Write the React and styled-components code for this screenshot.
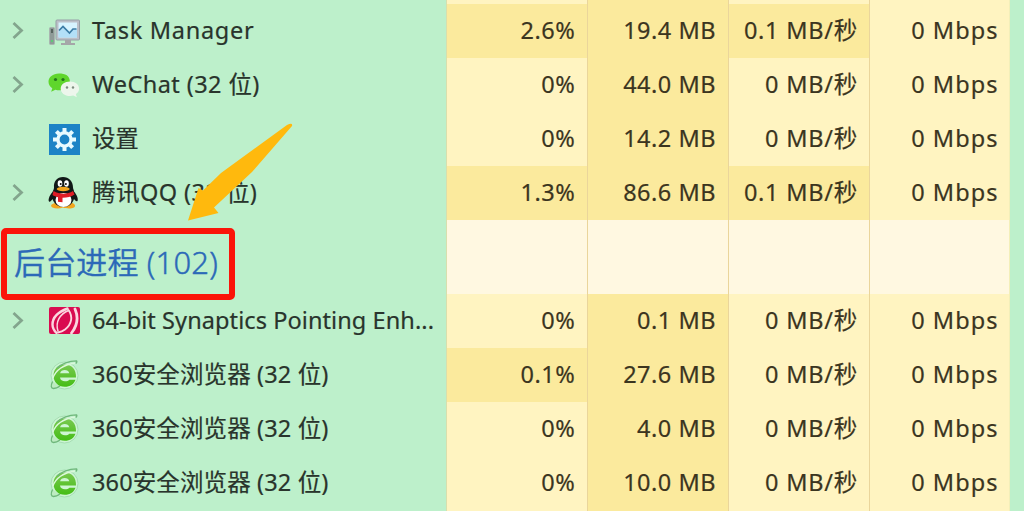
import React from "react";
import styled, { createGlobalStyle } from "styled-components";

const GlobalStyle = createGlobalStyle`
  html, body { margin: 0; padding: 0; overflow: hidden; background: #bdf0cb; }
  * { box-sizing: border-box; }
`;

const Window = styled.main`
  position: relative;
  width: 1024px;
  height: 511px;
  overflow: hidden;
  background: #bdf0cb;
  color: #29342c;
  font-family: "Noto Sans", "Noto Sans CJK SC", sans-serif;
  font-size: 23.5px;
  line-height: 53px;
  white-space: pre;
  -webkit-text-stroke: 0.2px currentColor;
`;

const Row = styled.div`
  display: grid;
  grid-template-columns: 447px 141px 141px 141px 140px;
  height: ${(p) => p.$height || 54}px;
`;

const NameCell = styled.div`
  display: flex;
  padding-left: 9px;
  border-right: 1px solid #d8dfad;
`;

const Arrow = styled.span`
  display: flex;
  align-items: center;
  width: 39px;
`;

const IconBox = styled.span`
  display: flex;
  align-items: center;
  width: 44px;
`;

const Label = styled.span`
  letter-spacing: ${(p) => p.$spacing || 0}px;
`;

const tones = { low: "#fff4c1", high: "#fbea9d", group: "#fff8e1" };

const Cell = styled.div`
  display: flex;
  justify-content: flex-end;
  padding-right: ${(p) => p.$pad || 11}px;
  background: ${(p) => tones[p.$tone]};
  border-right: 1px solid #ead59b;
  color: #3b351f;
  letter-spacing: ${(p) => p.$spacing || 0}px;

  &:last-child {
    border-right-color: #f3efb9;
  }
`;

const GroupTitle = styled.h2`
  margin: 7px 0 0 5px;
  font-size: 31px;
  font-weight: 350;
  line-height: 70px;
  color: #2c69b8;
  letter-spacing: 0.15px;
  -webkit-text-stroke: 0.4px currentColor;
`;

const Highlight = styled.div`
  position: absolute;
  left: 1px;
  top: 228px;
  width: 234px;
  height: 72px;
  border: 6px solid #fb1409;
  border-radius: 5px;
`;

const Pointer = styled.svg`
  position: absolute;
  left: 180px;
  top: 116px;
`;

const Chevron = () => (
  <svg width="20" height="22" viewBox="0 0 20 22" fill="none" stroke="#83a58d" strokeWidth="2.8">
    <path d="M4.500 3 12.500 10.500 4.500 18" />
  </svg>
);

const TaskManagerIcon = () => (
  <svg width="32" height="32" viewBox="0 0 32 32">
    <rect x="1.5" y="12.5" width="5" height="17" rx="1" fill="#8f9b98" stroke="#a9b5b0" />
    <path d="M3 14h2v4H3z" fill="#57645f" />
    <path d="M3 25h2v2H3z" fill="#5ec977" />
    <rect x="8" y="5" width="23.5" height="20" rx="1" fill="#bcc0c8" stroke="#969fa6" />
    <rect x="10.5" y="7.5" width="18.5" height="15" fill="#d6f4ff" />
    <path d="M10.5 16l5-5 6 7 3-4h4.500v8.500h-18.500z" fill="#b3e0f8" />
    <path d="M11 15.500 15 11.500 21.500 18 25 14h3.500" fill="none" stroke="#3b7ca5" strokeWidth="1.700" />
    <path d="M17 25h6v3h4v2H13v-2h4z" fill="#a5a6a8" />
  </svg>
);

const WeChatIcon = () => (
  <svg width="32" height="32" viewBox="0 0 32 32">
    <path d="M11 4.500C4.800 4.500.5 8.100.5 12.800c0 2.700 1.500 5 3.800 6.500L3.200 22.800l4.200-2c7.500 2 14.500-1.800 14.500-8S17.300 4.500 11 4.500z" fill="#5fd62c" />
    <path d="M22 12.500c-5.300 0-9.300 3.100-9.300 7.200s4 7.300 9.300 7.300c1.200 0 2.300-.2 3.300-.5l3.500 1.700-.9-3.100c2-1.300 3.200-3.200 3.200-5.400 0-4.100-3.900-7.200-9.100-7.200z" fill="#edf6ec" />
    <circle cx="7.500" cy="10.500" r="1.600" fill="#23751c" />
    <circle cx="15" cy="10.500" r="1.600" fill="#23751c" />
    <circle cx="19" cy="18.500" r="1.200" fill="#7d8c7f" />
    <circle cx="25" cy="18.500" r="1.200" fill="#7d8c7f" />
  </svg>
);

const SettingsIcon = () => (
  <svg width="32" height="32" viewBox="0 0 32 32">
    <rect x="1" y="1" width="31" height="31" fill="#1c83c6" />
    <g transform="translate(16.500 16.500)" stroke="#e8faff" fill="none">
      {[0, 45, 90, 135, 180, 225, 270, 315].map((a) => (
        <path key={a} d="M0-7.500V-11.500" strokeWidth="4" transform={`rotate(${a})`} />
      ))}
      <circle r="6.600" strokeWidth="3.400" />
    </g>
  </svg>
);

const QQIcon = () => (
  <svg width="32" height="34" viewBox="0 0 32 34">
    <path d="M7 27c-4 1-5 3-2.500 4.500C8 33 12 32.500 15 31.500c3 1 8 1.500 11 0 2-1.500 1-4-3-5z" fill="#f2a51d" />
    <path d="M15 1C9 1 5.500 5.500 6 11.500c0 2-1 3-1.500 4.500C1 20 0 24 1 25.500c1 1 2.500-1 3.500-2.500 1.500 5 6 8 11 8s9-3 10.500-8c1 1.500 2.500 3 3.500 2 1-2-.5-6-3.500-9.500 0-1.500-1-2.500-1-4C25 5.500 21 1 15 1z" fill="#111817" />
    <ellipse cx="15.500" cy="24" rx="8" ry="7" fill="#fff" />
    <path d="M5.500 15c6 3.500 14 3.500 19.500 0l1.500 3.500c-3.500 2.500-7 3.200-12 3.200v4.500l-4.500-.5v-4.500c-2-.5-4-1.200-5.500-2.200z" fill="#df1d26" />
    <ellipse cx="12" cy="7.500" rx="2.300" ry="3.300" fill="#fff" />
    <ellipse cx="18.500" cy="7.500" rx="2.300" ry="3.300" fill="#fff" />
    <circle cx="12.700" cy="8" r="1" fill="#111" />
    <circle cx="17.900" cy="8" r="1" fill="#111" />
    <ellipse cx="15.200" cy="13" rx="6.500" ry="2.200" fill="#f2a51d" />
  </svg>
);

const SynapticsIcon = () => (
  <svg width="32" height="30" viewBox="0 0 32 30">
    <rect x="1" y="1" width="31" height="27" rx="2" fill="#d90b50" />
    <g fill="none" stroke="#fbd6df" strokeLinecap="round">
      <path d="M19.500 2.500C10 6 4.500 12 4.500 18.500c0 3.500 1.500 6 4 8.500" strokeWidth="2.400" />
      <path d="M10 25C7 16 12 8 20.500 4.500" strokeWidth="1.500" />
      <path d="M20.500 4c4.500 6.500 3.500 14-3.500 19.500-2 1.500-4.500 2.500-7 3" strokeWidth="1.900" />
      <path d="M27 3c3.500 8 2 17-3.500 24" strokeWidth="2.800" />
    </g>
  </svg>
);

const BrowserIcon = () => (
  <svg width="32" height="34" viewBox="0 0 32 34">
    <defs>
      <linearGradient id="leaf" x1="0" y1="0" x2="0" y2="1">
        <stop offset="0" stopColor="#79c950" />
        <stop offset="1" stopColor="#45bd16" />
      </linearGradient>
    </defs>
    <circle cx="16.500" cy="17.500" r="13.500" fill="#cdf6d3" stroke="#a6ddb4" />
    <path d="M4.500 23.500c-2 4.500-1.500 7 1 7 2 0 4.500-1 6.500-2.500" fill="#bdecc1" stroke="#6fb77b" strokeWidth="1.300" />
    <path d="M28 19.500H12c.3 2.600 2.300 3.800 5 3.800 2 0 3.300-.6 4.300-1.600h6.200C26 26.200 22 28.800 16.800 28.800 10 28.800 5.500 24.300 5.500 17.600 5.500 11.100 10.200 6.600 16.800 6.600c7 0 11.500 5 11.200 12.900zM21.300 15.300c-.5-2.200-2.300-3.300-4.600-3.300s-4.100 1.100-4.600 3.300z" fill="url(#leaf)" />
    <path d="M5 20C7.500 12.500 15 7 27 5" fill="none" stroke="#dcf8dc" strokeWidth="1.300" />
    <path d="M9 10C14 5.500 21 3 28.500 2.800c.8.500.3 1.700-.8 2.700" fill="none" stroke="#6fb77b" strokeWidth="1.300" />
  </svg>
);

const icons = {
  task: TaskManagerIcon,
  wechat: WeChatIcon,
  settings: SettingsIcon,
  qq: QQIcon,
  synaptics: SynapticsIcon,
  browser: BrowserIcon,
};

const apps = [
  { icon: "task", name: "Task Manager", spacing: 0.7, open: true, values: ["2.6%", "19.4 MB", "0.1 MB/秒", "0 Mbps"] },
  { icon: "wechat", name: "WeChat (32 位)", spacing: 0.42, open: true, values: ["0%", "44.0 MB", "0 MB/秒", "0 Mbps"] },
  { icon: "settings", name: "设置", spacing: -0.2, values: ["0%", "14.2 MB", "0 MB/秒", "0 Mbps"] },
  { icon: "qq", name: "腾讯QQ (32 位)", spacing: 0.45, open: true, values: ["1.3%", "86.6 MB", "0.1 MB/秒", "0 Mbps"] },
];

const background = [
  { icon: "synaptics", name: "64-bit Synaptics Pointing Enh...", spacing: 0.08, open: true, values: ["0%", "0.1 MB", "0 MB/秒", "0 Mbps"] },
  { icon: "browser", name: "360安全浏览器 (32 位)", spacing: 0.13, values: ["0.1%", "27.6 MB", "0 MB/秒", "0 Mbps"] },
  { icon: "browser", name: "360安全浏览器 (32 位)", spacing: 0.13, values: ["0%", "4.0 MB", "0 MB/秒", "0 Mbps"] },
  { icon: "browser", name: "360安全浏览器 (32 位)", spacing: 0.13, values: ["0%", "10.0 MB", "0 MB/秒", "0 Mbps"] },
];

const columns = [
  { spacing: 0.6, pad: 11.5 },
  { spacing: 0.5, pad: 12 },
  { spacing: 0.75, pad: 11 },
  { spacing: 1.05, pad: 10.5 },
];

const isBusy = (value, column) => column === 1 || (column < 3 && parseFloat(value) > 0);

const ProcessRow = ({ process }) => {
  const Icon = icons[process.icon];
  return (
    <Row>
      <NameCell>
        <Arrow>{process.open && <Chevron />}</Arrow>
        <IconBox><Icon /></IconBox>
        <Label $spacing={process.spacing}>{process.name}</Label>
      </NameCell>
      {process.values.map((value, i) => (
        <Cell key={i} $tone={isBusy(value, i) ? "high" : "low"} $spacing={columns[i].spacing} $pad={columns[i].pad}>
          {value}
        </Cell>
      ))}
    </Row>
  );
};

const EmptyRow = ({ height }) => (
  <Row $height={height}>
    <NameCell />
    {columns.map((_, i) => <Cell key={i} $tone={i === 1 ? "high" : "low"} />)}
  </Row>
);

export default function App() {
  return (
    <>
      <GlobalStyle />
      <Window>
        <EmptyRow height={4} />
        {apps.map((p) => <ProcessRow key={p.name} process={p} />)}
        <Row $height={74}>
          <NameCell><GroupTitle>后台进程 (102)</GroupTitle></NameCell>
          {columns.map((_, i) => <Cell key={i} $tone="group" />)}
        </Row>
        {background.map((p, i) => <ProcessRow key={i} process={p} />)}
        <EmptyRow height={1} />
        <Highlight />
        <Pointer width="120" height="110" viewBox="0 0 120 110">
          <path d="M107 9Q113 6 112 10L72 56 34 91.500 38.500 97 8 104.500 18.500 72 23 74.500 41 57z" fill="#ffb90d" />
        </Pointer>
      </Window>
    </>
  );
}
